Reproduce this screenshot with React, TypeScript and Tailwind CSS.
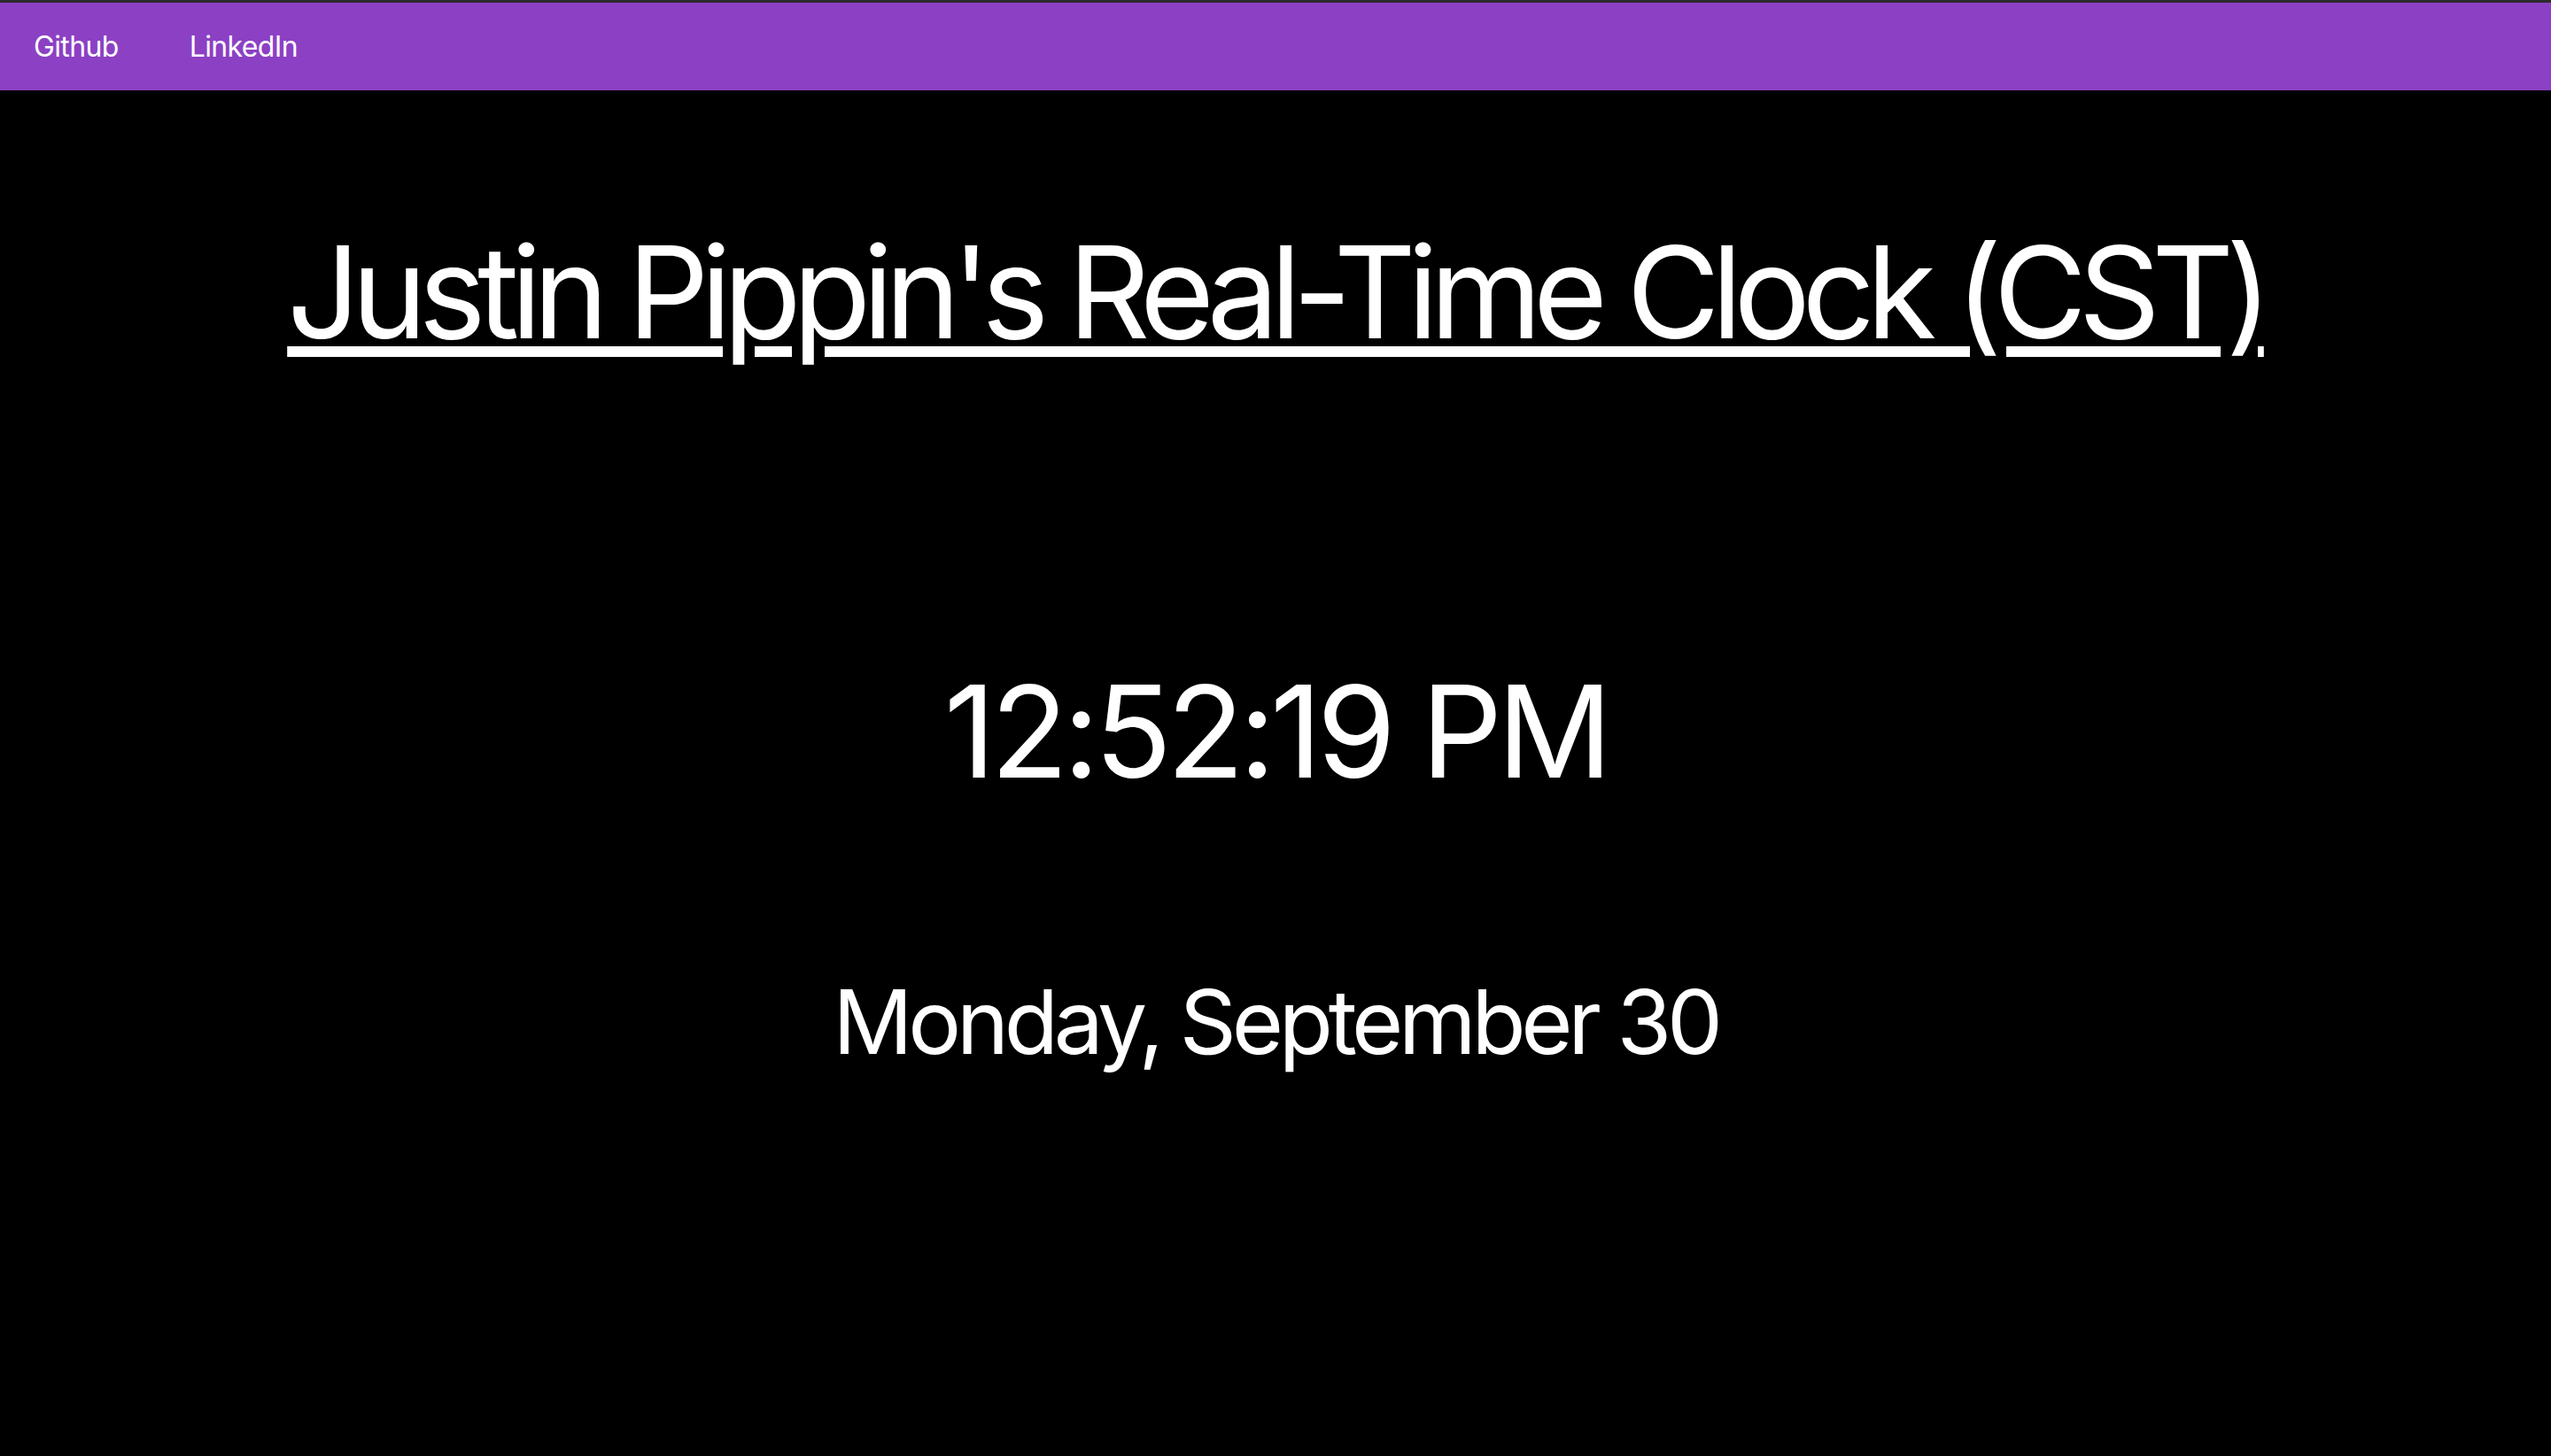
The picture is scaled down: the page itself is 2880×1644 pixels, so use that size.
import React from 'react';

const links = [
  { id: 'github', label: 'Github' },
  { id: 'linkedin', label: 'LinkedIn' },
];

const App: React.FC = () => {
  return (
    <div
      className="min-h-screen bg-black text-white flex flex-col"
      style={{ fontFamily: 'Inter, "Noto Sans", sans-serif' }}
    >
      {/* Top bar */}
      <nav className="h-[102px] bg-[#8c40c4] border-t-[3px] border-[#2b2b2b] flex items-center">
        <ul className="flex items-center gap-[4px]">
          {links.map((link) => (
            <li key={link.id} className="px-[38px] text-[32px] leading-none tracking-[-0.02em]">
              <a href="#" className="text-white no-underline">
                {link.label}
              </a>
            </li>
          ))}
        </ul>
      </nav>

      {/* Clock */}
      <main className="flex flex-col items-center">
        <h1 className="mt-[156px] text-[144px] leading-none font-normal tracking-[-0.066em] underline decoration-[length:12px] underline-offset-[9px]">
          Justin Pippin's Real-Time Clock (CST)
        </h1>
        <div className="mt-[352px] text-[144px] leading-none tracking-[-0.042em]">12:52:19 PM</div>
        <div className="mt-[206px] text-[100px] leading-none tracking-[-0.053em]">Monday, September 30</div>
      </main>
    </div>
  );
};

export default App;
